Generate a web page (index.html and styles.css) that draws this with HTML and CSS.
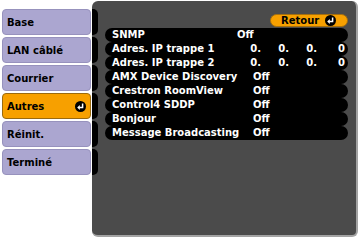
FILE: index.html
```html
<!DOCTYPE html>
<html lang="fr">
<head>
    <meta charset="UTF-8">
    <title>Réseau - Autres</title>
    <link rel="stylesheet" href="styles.css">
</head>
<body>
    <div class="screen">
        <nav class="sidebar">
            <div class="tab-wrap"><div class="tab">Base</div><div class="tab-edge"></div></div>
            <div class="tab-wrap"><div class="tab">LAN câblé</div><div class="tab-edge"></div></div>
            <div class="tab-wrap"><div class="tab">Courrier</div><div class="tab-edge"></div></div>
            <div class="tab-wrap">
                <div class="tab active">
                    <span>Autres</span>
                    <svg class="enter-icon" width="11" height="11" viewBox="0 0 11 11">
                        <circle cx="5.5" cy="5.5" r="5.5" fill="#000"/>
                        <path d="M7.6 2.6 V6.4 H4.2" stroke="#fff" stroke-width="1.5" fill="none"/>
                        <path d="M2.2 6.4 L4.8 3.9 L4.8 8.9 Z" fill="#fff"/>
                    </svg>
                </div>
                <div class="tab-edge"></div>
            </div>
            <div class="tab-wrap"><div class="tab">Réinit.</div><div class="tab-edge"></div></div>
            <div class="tab-wrap"><div class="tab">Terminé</div><div class="tab-edge"></div></div>
        </nav>

        <main class="panel">
            <div class="panel-head">
                <button class="back-btn">
                    <span>Retour</span>
                    <svg class="enter-icon" width="11" height="11" viewBox="0 0 11 11">
                        <circle cx="5.5" cy="5.5" r="5.5" fill="#000"/>
                        <path d="M7.6 2.6 V6.4 H4.2" stroke="#fff" stroke-width="1.5" fill="none"/>
                        <path d="M2.2 6.4 L4.8 3.9 L4.8 8.9 Z" fill="#fff"/>
                    </svg>
                </button>
            </div>

            <div class="rows">
                <div class="row"><span class="label short">SNMP</span><span class="value">Off</span></div>
                <div class="row">
                    <span class="label ip-label">Adres. IP trappe 1</span>
                    <span class="ip"><span>0.</span><span>0.</span><span>0.</span><span>0</span></span>
                </div>
                <div class="row">
                    <span class="label ip-label">Adres. IP trappe 2</span>
                    <span class="ip"><span>0.</span><span>0.</span><span>0.</span><span>0</span></span>
                </div>
                <div class="row"><span class="label">AMX Device Discovery</span><span class="value">Off</span></div>
                <div class="row"><span class="label">Crestron RoomView</span><span class="value">Off</span></div>
                <div class="row"><span class="label">Control4 SDDP</span><span class="value">Off</span></div>
                <div class="row"><span class="label">Bonjour</span><span class="value">Off</span></div>
                <div class="row"><span class="label">Message Broadcasting</span><span class="value">Off</span></div>
            </div>
        </main>
    </div>
</body>
</html>
```

FILE: styles.css
```css
* {
    margin: 0;
    padding: 0;
    box-sizing: border-box;
}

body {
    background-color: #fff;
    font-family: "DejaVu Sans", Verdana, sans-serif;
    font-weight: bold;
    font-size: 10px;
}

.screen {
    display: flex;
    width: 360px;
    height: 241px;
}

/* left menu */
.sidebar {
    position: relative;
    z-index: 1;
    width: 98px;
    padding-top: 9px;
    padding-left: 2px;
    display: flex;
    flex-direction: column;
    gap: 2px;
}

.tab-wrap {
    display: flex;
    gap: 1px;
    height: 26px;
}

.tab {
    width: 89px;
    display: flex;
    align-items: center;
    justify-content: space-between;
    padding: 0 4px 0 4px;
    background-color: #aba6d0;
    border: 1px solid #9792bd;
    border-radius: 4px;
    color: #000;
}

.tab.active {
    background-color: #f7a000;
    border-color: #9a6a10;
}

.tab-edge {
    width: 6px;
    background-color: #000;
    border-radius: 0 5px 5px 0;
}

/* right panel */
.panel {
    margin-top: 1px;
    margin-left: -6px;
    width: 266px;
    height: 236px;
    background-color: #4b4b4b;
    border-right: 2px solid #a3a3a3;
    border-bottom: 2px solid #a3a3a3;
    border-radius: 6px;
    display: flex;
    flex-direction: column;
}

.panel-head {
    height: 27px;
    display: flex;
    justify-content: flex-end;
    align-items: flex-end;
    padding: 0 8px 1px 0;
}

.back-btn {
    width: 78px;
    height: 13px;
    display: flex;
    align-items: center;
    justify-content: space-between;
    padding: 0 11px 0 10px;
    background-color: #f7a000;
    border: 1px solid #a56f0e;
    border-radius: 7px;
    font: inherit;
    color: #000;
}

.enter-icon {
    display: block;
}

.rows {
    margin: 0 8px 0 13px;
}

.row {
    display: flex;
    height: 14px;
    line-height: 14px;
    padding-left: 7px;
    background-color: #000;
    border-radius: 7px;
    color: #fff;
}

.label {
    width: 141px;
    white-space: nowrap;
}

.label.short {
    width: 125px;
}

.label.ip-label {
    width: 121px;
}

.ip {
    display: flex;
}

.ip span {
    width: 28px;
    text-align: right;
}
```
